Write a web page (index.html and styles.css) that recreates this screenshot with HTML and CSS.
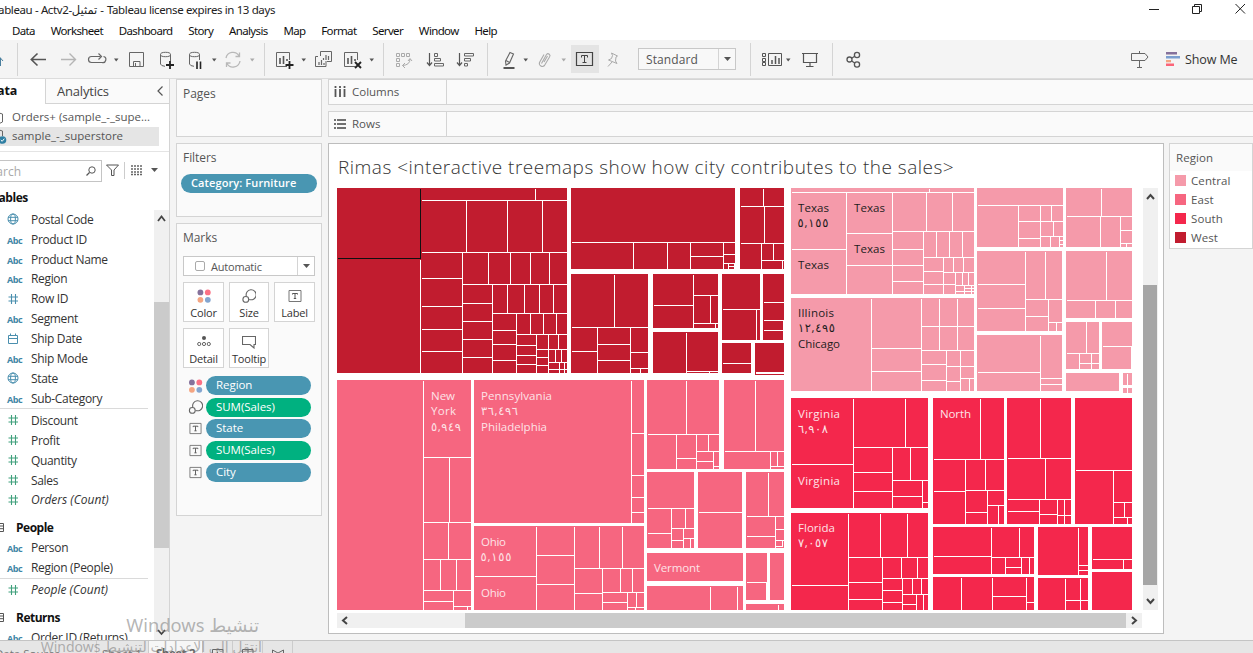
FILE: index.html
```html
<!DOCTYPE html>
<html lang="en">
<head>
<meta charset="utf-8">
<title>Tableau</title>
<link rel="stylesheet" href="styles.css">
</head>
<body>
<svg width="0" height="0" class="defs">
  <defs>
    <symbol id="globe" viewBox="0 0 12 12"><g fill="none" stroke="#4a8fae"><circle cx="6" cy="6" r="5"/><ellipse cx="6" cy="6" rx="2.4" ry="5"/><path d="M1 4.3H11M1 7.7H11"/></g></symbol>
    <symbol id="hash" viewBox="0 0 12 12"><path d="M4.5 1V11M8.5 1V11M1.5 4H11M1.5 8H11" fill="none" stroke="currentColor" stroke-width="1.1"/></symbol>
    <symbol id="cal" viewBox="0 0 12 12"><path d="M1.5 2.5H10.5V10.5H1.5zM1.5 5.5H10.5M3.5 .5V3M8.5 .5V3" fill="none" stroke="#4a8fae"/></symbol>
    <symbol id="dots" viewBox="0 0 14 14"><circle cx="3.4" cy="3.4" r="2.9" fill="#85719b"/><circle cx="10.8" cy="3.4" r="2.9" fill="#fb7185"/><circle cx="3.4" cy="10.8" r="2.9" fill="#f4a582"/><circle cx="10.8" cy="10.8" r="2.9" fill="#84a5cf"/></symbol>
    <symbol id="size" viewBox="0 0 14 14"><g fill="none" stroke="#666" stroke-width="1.1"><path d="M4.4 7.4A5 5 0 1 1 7.2 10.4"/><circle cx="3.8" cy="10.4" r="2.9"/></g></symbol>
    <symbol id="label" viewBox="0 0 14 14"><path d="M1 1.5H13V12.5H1z" fill="none" stroke="#777"/><path d="M4.5 5.5V4.5H9.500V5.500M7 4.500V9.500M5.800 9.500H8.200" fill="none" stroke="#555"/></symbol>
    <symbol id="detail" viewBox="0 0 14 14"><circle cx="7" cy="3" r="2" fill="#555"/><g fill="none" stroke="#666"><circle cx="2.200" cy="9" r="1.600"/><circle cx="7" cy="9" r="1.600"/><circle cx="11.800" cy="9" r="1.600"/></g></symbol>
    <symbol id="tip" viewBox="0 0 14 14"><path d="M.5 1.500H13.500V9.500H12V13L8 9.500H.5z" fill="none" stroke="#666" stroke-width="1.100"/></symbol>
    <symbol id="table" viewBox="0 0 10 10"><path d="M.5 .5H8.500V8.500H.5zM.5 3H8.500M.5 5.700H8.500M4.500 3V8.500" fill="none" stroke="#555"/></symbol>
  </defs>
</svg>

<header class="titlebar">
  <span class="title">Tableau - Actv2-<bdi>تمثيل</bdi> - Tableau license expires in 13 days</span>
  <svg width="113" height="20" viewBox="1140 0 113 20" fill="none" stroke="#222"><path d="M1149 9.500H1159"/><path d="M1192.500 6.500H1199.500V13.500H1192.500zM1194.500 6.500V4.500H1201.500V11.500H1199.500"/><path d="M1235.500 4L1245 13.500M1245 4L1235.500 13.500"/></svg>
</header>
<nav class="menu"><span>Data</span><span>Worksheet</span><span>Dashboard</span><span>Story</span><span>Analysis</span><span>Map</span><span>Format</span><span>Server</span><span>Window</span><span>Help</span></nav>

<div class="toolbar">
  <svg width="17" height="39" viewBox="0 40 17 39"><path d="M-3 61L0 57.500L3 61M.5 58V66" stroke="#4a7f9e" fill="none"/></svg>
  <i class="sep"></i>
  <svg width="36" height="39" viewBox="18 40 36 39"><path d="M31 59.500H46M37.500 53.500L31.300 59.500L37.500 65.500" stroke="#555" stroke-width="1.600" fill="none"/></svg>
  <svg width="30" height="39" viewBox="54 40 30 39"><path d="M61 59.500H75.500M69.500 53.500L75.500 59.500L69.500 65.500" stroke="#b5b5b5" stroke-width="1.400" fill="none"/></svg>
  <svg width="38" height="39" viewBox="84 40 38 39"><path d="M96 62.500H91.500A3 3 0 0 1 91.500 56.500H100.500M103.500 56.500A3 3 0 0 1 102 62.500H95M98.500 53.500L101.500 56.500L98.500 59.500" stroke="#666" stroke-width="1.200" fill="none"/><path d="M114 58.500H118.500L116.200 61.500z" fill="#555"/></svg>
  <svg width="30" height="39" viewBox="122 40 30 39"><path d="M129.500 52.500H143.500V66.500H129.500zM133.500 66V61.500H140V66M135.500 63V66" stroke="#666" fill="none"/></svg>
  <svg width="30" height="39" viewBox="152 40 30 39"><g fill="none" stroke="#666"><ellipse cx="165.500" cy="54.500" rx="5" ry="2.200"/><path d="M160.500 54.500V64Q161 66 165 66.300M170.500 54.500V61"/></g><path d="M170 61V69M166 65H174" stroke="#222" stroke-width="1.800"/></svg>
  <svg width="38" height="39" viewBox="182 40 38 39"><g fill="none" stroke="#666"><ellipse cx="194.500" cy="54.500" rx="5" ry="2.200"/><path d="M189.500 54.500V64Q190 66 194 66.300M199.500 54.500V60"/></g><path d="M197 61.500V69M200.500 61.500V69" stroke="#222" stroke-width="1.600"/><path d="M212 58.500H216.500L214.200 61.500z" fill="#555"/></svg>
  <svg width="44" height="39" viewBox="220 40 44 39"><path d="M226 58A7 7 0 0 1 239 56M240 61A7 7 0 0 1 227 63.500M239.500 52.500V56.500H235.500M226.500 67V63H230.500" fill="none" stroke="#b8b8b8" stroke-width="1.300"/><path d="M250 58.500H254.500L252.200 61.500z" fill="#aaa"/></svg>
  <i class="sep"></i>
  <svg width="45" height="39" viewBox="265 40 45 39"><path d="M287 66.500H276.500V52.500H289.500V60" fill="none" stroke="#666"/><path d="M280 64V58M283.500 64V56M287 61V59" stroke="#555" stroke-width="1.600"/><path d="M289.500 61V69M285.500 65H293.500" stroke="#222" stroke-width="1.800"/><path d="M301.500 58.500H306L303.700 61.500z" fill="#555"/></svg>
  <svg width="27" height="39" viewBox="310 40 27 39"><path d="M320.500 56V51.500H331.500V61.500H327M318 56.500H315.500V66.500H326V61" fill="none" stroke="#666"/><path d="M323.500 60V58M326 60V55M328.500 60V56M319 65V62M321.500 65V60M324 65V63" stroke="#666" stroke-width="1.200"/></svg>
  <svg width="46" height="39" viewBox="337 40 46 39"><path d="M355 66.500H344.500V52.500H357.500V60" fill="none" stroke="#666"/><path d="M348 64V58M351.500 64V56M355 61V59" stroke="#555" stroke-width="1.600"/><path d="M355 62L361 68M361 62L355 68" stroke="#222" stroke-width="1.900"/><path d="M369.500 58.500H374L371.700 61.500z" fill="#555"/></svg>
  <i class="sep"></i>
  <svg width="36" height="39" viewBox="384 40 36 39"><g fill="none" stroke="#aaa"><path d="M396.500 53.500H399.500V56.500H396.500zM401.500 53.500H404.500V56.500H401.500zM406.500 53.500H409.500V56.500H406.500zM396.500 58.500H399.500V61.500H396.500zM396.500 63.500H399.500V66.500H396.500z"/><path d="M410 59Q410 65 402.500 65.500M408 61L410 58.500L412 61M405 63L402.500 65.500L405 68"/></g></svg>
  <svg width="31" height="39" viewBox="420 40 31 39"><path d="M429.500 53V65M427 62.500L429.500 65.500L432 62.500" fill="none" stroke="#555" stroke-width="1.200"/><path d="M434.500 53.500H437.500V56.500H434.500zM434.500 58.500H440.500V61H434.500zM434.500 63.500H443.500V66H434.500z" fill="none" stroke="#666"/></svg>
  <svg width="36" height="39" viewBox="451 40 36 39"><path d="M459.500 53V65M457 62.500L459.500 65.500L462 62.500" fill="none" stroke="#555" stroke-width="1.200"/><path d="M464.500 53.500H473.500V56H464.500zM464.500 58.500H470.500V61H464.500zM464.500 63.500H467.500V66H464.500z" fill="none" stroke="#666"/></svg>
  <i class="sep"></i>
  <svg width="43" height="39" viewBox="488 40 43 39"><path d="M510 52.500L513.500 54L509.500 63L506 65L505.500 61z M506 60.500L509.500 62.500" fill="none" stroke="#666" stroke-width="1.100"/><path d="M503.500 68H514.500" stroke="#555" stroke-width="2"/><path d="M523.500 58.500H528L525.700 61.500z" fill="#555"/></svg>
  <svg width="40" height="39" viewBox="531 40 40 39"><path d="M541.500 63.500L546.500 54.500A1.900 1.900 0 0 1 549.500 57L544.500 65.500A3 3 0 0 1 539.500 62.500L544 54.500M544 62L547.500 56" fill="none" stroke="#aaa" stroke-width="1.100"/><path d="M561.500 58.500H566L563.700 61.500z" fill="#aaa"/></svg>
  <span class="pressed"><svg width="28" height="28" viewBox="571 45 28 28"><path d="M576.500 52.500H592.500V65.500H576.500z" fill="none" stroke="#444" stroke-width="1.200"/><path d="M581.500 57.500V55.500H587.500V57.500M584.500 55.500V62.500M582.500 62.500H586.500" fill="none" stroke="#444"/></svg></span>
  <svg width="39" height="39" viewBox="599 40 39 39"><path d="M611.500 53L617.500 56L616 57L615.500 61L617 63.500L608.500 60L611.500 58.500L612.500 55.500zM612 62L608 66.500" fill="none" stroke="#aaa"/></svg>
  <div class="combo"><span>Standard</span><b><svg width="7" height="4"><path d="M0 0H7L3.500 4z" fill="#555"/></svg></b></div>
  <i class="sep sep-fit"></i>
  <svg width="43" height="39" viewBox="751 40 43 39"><path d="M762.500 53.500H765.500V56.500H762.500zM762.500 58.500H765.500V61.500H762.500zM762.500 62.500H765.500V65.500H762.500zM768.500 53.500H781.500V65.500H768.500z" fill="none" stroke="#555"/><path d="M772 64V60M775.500 64V56M779 64V58" stroke="#555" stroke-width="1.500"/><path d="M786 58.500H790.500L788.200 61.500z" fill="#555"/></svg>
  <svg width="38" height="39" viewBox="794 40 38 39"><path d="M802 53.500H818M803.500 53.500V62.500H816.500V53.500M810 62.500V66.500M806 66.500H813.500" fill="none" stroke="#555" stroke-width="1.200"/></svg>
  <i class="sep"></i>
  <svg width="40" height="39" viewBox="833 40 40 39"><g fill="none" stroke="#555" stroke-width="1.300"><circle cx="849.500" cy="59.500" r="2.500"/><circle cx="857" cy="55" r="2.600"/><circle cx="857" cy="64.500" r="2.600"/><path d="M851.700 58.200L854.700 56.300M851.700 61L854.700 63"/></g></svg>
  <span class="grow"></span>
  <svg width="26" height="39" viewBox="1126 40 26 39"><path d="M1131.500 53.500H1145L1148 57L1145 60.500H1131.500zM1139.500 51V53.500M1139.500 60.500V67.500M1137 67.500H1142" fill="none" stroke="#666"/></svg>
  <svg class="showicon" width="14" height="14"><path d="M0 0H11V2.500H0z" fill="#85719b"/><path d="M0 4H14V6.500H0z" fill="#7b9fd0"/><path d="M0 8H5V10.300H0z" fill="#f4a582"/><path d="M0 11.500H8V14H0z" fill="#fb6478"/></svg>
  <span class="showme">Show Me</span>
</div>

<main class="main">
  <aside class="data">
    <div class="tabs"><b class="on">Data</b><span class="off">Analytics<svg width="7" height="10"><path d="M5.500 .5L1 5L5.500 9.500" fill="none" stroke="#555" stroke-width="1.200"/></svg></span></div>
    <div class="srcs">
      <div class="src"><svg width="10" height="14"><path d="M-4 3Q-1 1 2.500 3V11Q0 13 -3 12" fill="none" stroke="#666"/></svg><span>Orders+ (sample_-_supe...</span></div>
      <div class="src sel"><svg width="10" height="18"><path d="M-4 3Q-1 1 2.500 3V8" fill="none" stroke="#666"/><circle cx="2.500" cy="12" r="3.800" fill="#2f7fa3"/><path d="M.8 12L2.200 13.300L4.300 10.700" fill="none" stroke="#fff"/></svg><span>sample_-_superstore</span></div>
    </div>
    <div class="find">
      <div class="search"><span>Search</span><svg width="10" height="10"><circle cx="6" cy="4" r="3.200" fill="none" stroke="#555"/><path d="M3.500 6.500L.5 9.500" stroke="#555" stroke-width="1.200"/></svg></div>
      <svg width="62" height="22" viewBox="102 160 62 22"><path d="M106.500 165H118.500L114 170V175.500H111.500V170z" fill="none" stroke="#555"/><path d="M124.500 162V179" stroke="#ccc"/><path d="M131 166H142M131 169H142M131 172H142M131 174.500H142" stroke="#666" stroke-width="1.500" stroke-dasharray="2 1"/><path d="M151 168H158L154.500 172z" fill="#555"/></svg>
    </div>
    <div class="thead">Tables</div>
    <div class="fields">
      <div class="list">
        <div class="f"><svg width="12" height="12"><use href="#globe"/></svg>Postal Code</div>
        <div class="f"><em>Abc</em>Product ID</div>
        <div class="f"><em>Abc</em>Product Name</div>
        <div class="f"><em>Abc</em>Region</div>
        <div class="f dim"><svg width="12" height="12"><use href="#hash"/></svg>Row ID</div>
        <div class="f"><em>Abc</em>Segment</div>
        <div class="f"><svg width="12" height="12"><use href="#cal"/></svg>Ship Date</div>
        <div class="f"><em>Abc</em>Ship Mode</div>
        <div class="f"><svg width="12" height="12"><use href="#globe"/></svg>State</div>
        <div class="f"><em>Abc</em>Sub-Category</div>
        <hr>
        <div class="f mea"><svg width="12" height="12"><use href="#hash"/></svg>Discount</div>
        <div class="f mea"><svg width="12" height="12"><use href="#hash"/></svg>Profit</div>
        <div class="f mea"><svg width="12" height="12"><use href="#hash"/></svg>Quantity</div>
        <div class="f mea"><svg width="12" height="12"><use href="#hash"/></svg>Sales</div>
        <div class="f mea it"><svg width="12" height="12"><use href="#hash"/></svg>Orders (Count)</div>
        <div class="tbl"><svg width="10" height="10"><use href="#table"/></svg>People</div>
        <div class="f"><em>Abc</em>Person</div>
        <div class="f"><em>Abc</em>Region (People)</div>
        <hr>
        <div class="f mea it"><svg width="12" height="12"><use href="#hash"/></svg>People (Count)</div>
        <div class="tbl"><svg width="10" height="10"><use href="#table"/></svg>Returns</div>
        <div class="f"><em>Abc</em>Order ID (Returns)</div>
      </div>
      <div class="vs"><svg width="15" height="92"><path d="M4 11L7.500 6.500L11 11" fill="none" stroke="#444" stroke-width="1.800"/></svg><i></i><svg class="end" width="15" height="20"><path d="M4 10L7.500 14L11 10" fill="none" stroke="#444" stroke-width="1.800"/></svg></div>
    </div>
  </aside>

  <section class="cards">
    <div class="card pages">Pages</div>
    <div class="card filters">Filters<span class="pill">Category: Furniture</span></div>
    <div class="card marks">Marks
      <div class="mtype"><i></i><span>Automatic</span><b><svg width="7" height="4"><path d="M0 0H7L3.500 4z" fill="#555"/></svg></b></div>
      <div class="btns">
        <div><svg width="14" height="14"><use href="#dots"/></svg>Color</div>
        <div><svg width="14" height="14"><use href="#size"/></svg>Size</div>
        <div><svg width="14" height="14"><use href="#label"/></svg>Label</div>
        <div><svg width="14" height="14"><use href="#detail"/></svg>Detail</div>
        <div><svg width="14" height="14"><use href="#tip"/></svg>Tooltip</div>
      </div>
      <div class="enc"><svg width="14" height="14"><use href="#dots"/></svg><span class="pill">Region</span></div>
      <div class="enc"><svg width="14" height="14"><use href="#size"/></svg><span class="pill green">SUM(Sales)</span></div>
      <div class="enc"><svg width="13" height="13"><use href="#label"/></svg><span class="pill">State</span></div>
      <div class="enc"><svg width="13" height="13"><use href="#label"/></svg><span class="pill green">SUM(Sales)</span></div>
      <div class="enc"><svg width="13" height="13"><use href="#label"/></svg><span class="pill">City</span></div>
    </div>
  </section>

  <section class="work">
    <div class="shelf"><div><svg width="12" height="12"><path d="M1.500 0V2M1.500 3V11M6 0V2M6 3V11M10.500 0V2M10.500 3V11" stroke="#555" stroke-width="1.800"/></svg>Columns</div></div>
    <div class="shelf"><div><svg width="12" height="12"><path d="M0 2H2M3 2H12M0 6H2M3 6H12M0 10H2M3 10H12" stroke="#444" stroke-width="1.700"/></svg>Rows</div></div>
    <div class="row">
      <div class="viz">
        <h1>Rimas &lt;interactive treemaps show how city contributes to the sales&gt;</h1>
        <div class="plot">
          <svg class="map" width="796" height="422" viewBox="337 188 796 422">
            <path fill="#c11c2f" d="M337 188H567V373H337zM571 188H735V269H571zM740 188H784V269H740zM571 274H648V373H571zM653 274H718V328H653zM653 332H718V373H653zM722 274H760V340H722zM763 274H784V340H763zM722 343H751V373H722zM755 343H784V375H755z"/>
            <path fill="#f66680" d="M337 380H471V610H337zM474 380H644V523H474zM474 526H644V610H474zM647 380H719V469H647zM724 380H784V469H724zM647 472H694V548H647zM698 472H742V548H698zM746 472H784V548H746zM647 553H743V581H647zM647 586H743V610H647zM746 553H767V600H746zM770 553H784V600H770zM746 604H784V610H746z"/>
            <path fill="#f59aaa" d="M791 188H974V294H791zM791 298H974V391H791zM977 188H1063V247H977zM1066 188H1132V247H1066zM977 251H1062V331H977zM1066 251H1132V318H1066zM977 335H1062V391H977zM1066 322H1099V369H1066zM1102 322H1132V369H1102zM1066 373H1119V391H1066zM1123 373H1132V385H1123zM1123 388H1132V393H1123z"/>
            <path fill="#f4274c" d="M791 398H928V508H791zM791 513H928V610H791zM933 398H1004V524H933zM1007 398H1071V524H1007zM1075 398H1132V524H1075zM933 527H1034V574H933zM1038 527H1088V575H1038zM1092 527H1132V569H1092zM933 577H1034V610H933zM1038 578H1088V610H1038zM1092 572H1132V610H1092z"/>
            <g class="cuts" transform="translate(.5 .5)">
              <path d="M420 259V373M421 200H567M535 188V200M421 252H567M466 200V252M507 200V252M542 200V252M462 252V373M421 278H462M421 306H462M421 329H462M421 351H462M462 284H567M488 252V284M510 252V284M530 252V284M549 252V284M492 284V373M462 303H492M462 321H492M462 339H492M462 357H492M492 313H567M507 284V313M524 284V313M539 284V313M553 284V313M516 313V373M492 330H516M492 344H516M492 360H516M516 334H567M530 313V334M543 313V334M556 313V334M536 334V373M516 345H536M516 355H536M516 364H536M536 349H567M548 334V373M558 334V349M536 357H548M536 365H548M548 362H567M548 369H567M555 349V362M561 349V362M559 362V373M564 362V373"/>
              <path d="M571 242H735M633 242V269M667 242V269M690 242V269M723 242V269M690 256H723M723 254H735M723 263H735M728 263V269M728 266H734M734 263V269M740 206H784M763 188V206M764 206V243M740 243H784M761 243V269M773 243V260M761 260H784M782 260V269M614 274V327M571 327H648M597 327V373M630 327V373M571 351H597M597 344H630M597 360H630M630 352H648M630 368H648M640 368V373M693 274V329M653 305H693M693 295H718M710 295V323M693 323H718M715 323V329M686 332V373M686 371H718M709 371V373M722 309H760M756 309V340M763 302H784M763 320H784M763 330H784M783 320V340M722 363H751M755 372H784M755 373H784"/>
              <path d="M423 380V610M423 457H471M449 457V522M423 522H471M448 522V559M423 559H471M440 559V590M456 559V590M423 590H471M453 590V610M423 601H453M453 606H471M467 606V610M631 380V523M631 433H644M631 475H644M631 497H644M631 512H644M536 526V610M474 576H536M574 526V610M536 555H574M536 584H574M574 568H644M599 526V568M622 526V568M602 568V610M620 568V592M632 568V592M602 592H644M574 593H602M602 602H627M627 592V610M636 592V607M627 607H644M635 607V610"/>
              <path d="M647 434H719M686 380V434M676 434V469M696 434V469M676 458H696M696 451H719M708 434V451M713 451V469M696 461H713M713 466H719M755 380V451M724 451H784M770 451V469M777 451V466M770 466H784M647 508H694M671 508V548M685 508V528M671 528H694M647 533H671M683 528V548M671 540H683M683 538H694M690 538V548M698 512H742M768 472V516M746 516H784M775 516V548M746 536H775M775 529H784M775 540H784M775 546H782M782 540V546M710 586V610M737 586V610M746 582H767M766 582V600M778 604V610"/>
              <path d="M791 192H974M929 188V192M846 192V294M791 249H846M892 192V294M846 233H892M846 265H923M892 231H974M926 192V231M952 192V231M923 231V294M892 249H923M892 281H923M936 231V257M949 231V257M962 231V257M923 257H974M943 257V294M923 271H943M923 284H955M953 257V272M963 257V272M943 272H974M955 272V294M962 272V285M968 272V285M955 285H974M955 291H964M964 285V294M964 288H974M964 291H974M971 285V294M871 298V391M921 298V391M871 348H921M871 371H921M921 326H974M939 298V350M957 298V350M921 350H974M946 350V391M960 350V391M921 364H946M921 380H946M946 366H974M946 381H960M960 378H974M969 378V391"/>
              <path d="M977 205H1063M1018 205V247M1040 205V247M1051 205V221M1018 221H1063M1053 221V236M1018 238H1040M1040 236H1063M1050 236V247M1059 236V247M1059 240H1063M1059 244H1063M1066 216H1132M1101 188V216M1100 216V247M1120 216V247M1120 230H1132M1120 243H1132M1126 243V247M1025 251V332M977 284H1025M977 308H1025M1045 251V299M1025 299H1062M1048 299V332M1025 316H1048M1048 322H1062M1056 322V332M1066 300H1132M1106 251V300M1095 300V318M1115 300V318M1040 335V391M977 372H1040M1040 378H1062M1040 384H1062M1066 353H1099M1086 321V353M1079 353V369M1091 353V369M1079 363H1099M1102 346H1132M1131 346V369M1127 373V393"/>
              <path d="M853 398V509M791 464H853M905 398V447M853 447H928M892 447V509M853 472H892M853 491H892M910 447V480M892 480H928M922 480V509M892 496H922M922 502H928M848 513V610M791 585H848M848 557H928M880 513V557M907 513V557M882 557V610M848 582H882M848 599H882M901 557V578M917 557V578M882 578H928M902 578V610M882 590H902M882 602H902M912 578V594M921 578V594M902 594H928M916 594V610M902 604H916M923 594V610M980 398V459M933 459H1004M965 459V524M933 491H965M985 459V490M965 490H1004M987 490V524M965 512H987M987 505H1004M998 505V524M1007 458H1071M1040 398V458M1045 458V499M1007 499H1071M1039 499V524M1007 511H1039M1057 499V524M1039 514H1057M1057 515H1071M1064 499V524M1075 470H1132M1113 470V524M1113 502H1132M1124 502V517M1113 517H1132M1127 517V524"/>
              <path d="M991 527V574M933 556H991M1019 527V557M991 557H1034M1005 557V574M1021 557V574M1029 557V574M1005 567H1021M1078 527V575M1078 565H1088M1078 570H1088M1092 559H1132M1123 559V570M961 577V610M992 577V610M1026 577V610M992 596H1026M1026 602H1034M1065 578V610M1080 578V610M1065 600H1088"/>
              <path class="picked" d="M337 258H420V188"/>
            </g>
            <g class="lab dark" transform="translate(0 -.8)">
              <text x="798" y="213" textLength="31">Texas</text><text x="797.500" y="228" textLength="31">٥,١٥٥</text><text x="854" y="213" textLength="31">Texas</text><text x="854" y="253.500" textLength="31">Texas</text><text x="798" y="270" textLength="31">Texas</text>
              <text x="798" y="318" textLength="36">Illinois</text><text x="798" y="333" textLength="37">١٢,٤٩٥</text><text x="798" y="349" textLength="42">Chicago</text>
            </g>
            <g class="lab" transform="translate(0 -.3)">
              <text x="431" y="400" textLength="24">New</text><text x="431" y="415" textLength="25">York</text><text x="431" y="431" textLength="30">٥,٩٤٩</text>
              <text x="481" y="400" textLength="71">Pennsylvania</text><text x="481" y="415" textLength="37">٣٦,٤٩٦</text><text x="481" y="431" textLength="66">Philadelphia</text>
              <text x="481" y="546" textLength="25">Ohio</text><text x="480.500" y="561" textLength="31">٥,١٥٥</text><text x="481" y="597" textLength="25">Ohio</text>
              <text x="654" y="572" textLength="46">Vermont</text>
              <text x="798" y="418" textLength="42">Virginia</text><text x="798" y="433" textLength="30">٦,٩٠٨</text><text x="798" y="485" textLength="42">Virginia</text>
              <text x="798" y="532" textLength="37">Florida</text><text x="798" y="547.500" textLength="30">٧,٠٥٧</text>
              <text x="940" y="418" textLength="31">North</text>
            </g>
          </svg>
          <div class="vscroll"><svg width="15" height="97"><path d="M4 11L7.500 7L11 11" fill="none" stroke="#444" stroke-width="2"/></svg><i></i><svg width="15" height="24"><path d="M4 14L7.500 18L11 14" fill="none" stroke="#444" stroke-width="2"/></svg></div>
        </div>
        <div class="hscroll"><svg width="128" height="15"><path d="M10 4L6 7.500L10 11" fill="none" stroke="#444" stroke-width="2"/></svg><i></i><svg width="16" height="15"><path d="M6 4L10 7.500L6 11" fill="none" stroke="#444" stroke-width="2"/></svg></div>
      </div>
      <div class="legend"><h2>Region</h2>
        <div><i class="c"></i>Central</div><div><i class="e"></i>East</div><div><i class="s"></i>South</div><div><i class="w"></i>West</div>
      </div>
    </div>
  </section>
</main>

<footer class="sheets">
  <span class="ds">Data Source</span><span class="s1">Sheet 1</span><b class="s2">Sheet 2</b>
  <span class="ic"><svg width="12" height="10"><path d="M.5 9V.5H11V9M3 9V5M5.500 9V3M8 6H11" fill="none" stroke="#666"/></svg></span>
  <span class="ic"><svg width="12" height="10"><path d="M.5 9V.5H11V9M.5 5H11M6 0V9" fill="none" stroke="#666"/></svg></span>
  <span class="ic"><svg width="12" height="10"><path d="M.5 9V1L6 4L11.500 1V9" fill="none" stroke="#666"/></svg></span>
</footer>
<div class="wm wm1" dir="rtl">تنشيط Windows</div>
<div class="wm wm2" dir="rtl">انتقل إلى الإعدادات لتنشيط Windows</div>
</body>
</html>
```
FILE: styles.css
```css
*{box-sizing:border-box}
body{margin:0;width:1253px;height:653px;overflow:hidden;background:#fff;display:flex;flex-direction:column;font:12px "Open Sans","DejaVu Sans",sans-serif;color:#444;position:relative}
svg{display:block;flex:none}
.defs{position:absolute}
.titlebar{height:20px;flex:none;display:flex;justify-content:space-between;font:11.500px/20px "Noto Sans","DejaVu Sans",sans-serif;color:#222;white-space:nowrap}
.title{margin-left:-7px;letter-spacing:-.38px}
.menu{height:20px;flex:none;display:flex;gap:15.800px;padding-left:12px;font:11.500px/22px "Noto Sans",sans-serif;letter-spacing:-.64px;color:#111}
.toolbar{height:39px;flex:none;background:#f4f4f4;display:flex;align-items:center;border-bottom:1px solid #dcdcdc}
.sep{width:1px;height:33px;background:#d4d4d4;flex:none}
.pressed{width:28px;height:28px;background:#e4e4e4}
.combo{width:98px;height:22px;border:1px solid #c8c8c8;background:#f8f8f8;display:flex;align-items:center;color:#555;letter-spacing:.1px}
.combo span{flex:1;padding-left:7px}
.combo b,.mtype b{width:17px;height:100%;border-left:1px solid #d4d4d4;display:flex;align-items:center;justify-content:center}
.sep-fit{margin-left:14px}
.grow{flex:1}
.showicon{margin:0 5px 0 14px}
.showme{width:68px;color:#333;font-size:12.500px;letter-spacing:-.1px;white-space:nowrap}
.main{flex:1;min-height:0;background:#f4f4f4;display:flex}
.data{width:170px;background:#fff;border-right:1px solid #d4d4d4;display:flex;flex-direction:column;flex:none}
.tabs{height:25px;display:flex;line-height:24px;font-size:13px;letter-spacing:-.2px;flex:none}
.tabs .on{width:45px;text-indent:-12px;overflow:hidden;color:#111;font-size:12.500px}
.tabs .off{flex:1;background:#fafafa;border-left:1px solid #d4d4d4;border-bottom:1px solid #d4d4d4;padding:0 5px 0 11px;display:flex;justify-content:space-between;align-items:center}
.srcs{height:48px;padding-top:4px;border-bottom:1px solid #e4e4e4;flex:none}
.src{height:19px;width:159px;display:flex;align-items:center;gap:2px;font-size:11.500px;color:#555;white-space:nowrap}
.src span{padding-bottom:2px}
.sel{background:#e5e5e5}
.find{display:flex;margin-top:8px;height:22px;flex:none}
.search{width:102px;height:22px;border:1px solid #c4c4c4;border-left:0;display:flex;align-items:center;justify-content:space-between;padding-right:5px;color:#aaa}
.search span{margin-left:-17px}
.thead{font-weight:700;color:#111;line-height:32px;letter-spacing:-.45px;margin-left:-8px;height:27px;flex:none}
.fields{flex:1;min-height:0;display:flex}
.list{width:154px;overflow:hidden;padding-top:.3px;letter-spacing:-.33px}
.f{height:19.900px;display:flex;align-items:center;padding-left:7px;color:#333;white-space:nowrap;font-size:12px}
.f em{font:700 9px "Open Sans",sans-serif;color:#3f86a5;width:24px;letter-spacing:-.4px;padding-top:2px}
.f svg{width:12px;margin-right:12px;color:#4a8fae}
.mea svg{color:#3fa07c}
.it{font-style:italic;letter-spacing:0}
.list hr{border:0;border-top:1px solid #dadada;margin:0 6px 1.200px 0;height:0}
.tbl{height:20px;margin-top:8px;display:flex;align-items:center;font-weight:700;color:#111;gap:11px;margin-left:-5px;letter-spacing:-.5px}
.vs{width:15px;background:#f0f0f0;display:flex;flex-direction:column;margin-top:1px}
.vs i{height:246px;background:#cbcbcb}
.vs .end{margin-top:auto}
.cards{width:146px;margin-left:6px;display:flex;flex-direction:column;gap:6px;flex:none}
.card{border:1px solid #d4d4d4;background:#fafafa;padding:5px 6px 0;letter-spacing:-.05px;line-height:17px;color:#555}
.pages{height:58px}
.filters{height:74px}
.marks{height:293px}
.pill{background:#4996b2;color:#fff;border-radius:10px;height:19px;line-height:18px;padding-left:10px;display:block;font-size:11.500px}
.filters .pill{margin:8px -2px 0 -2px;font-weight:600;font-size:11px;letter-spacing:.1px}
.green{background:#00b180}
.mtype{height:20px;border:1px solid #c8c8c8;background:#fff;display:flex;align-items:center;margin-top:10px;font-size:11px;letter-spacing:-.2px}
.mtype i{width:10px;height:10px;border:1px solid #aaa;border-radius:2px;margin:0 6px 0 11px}
.mtype span{flex:1}
.btns{display:grid;grid-template-columns:41px 40px 41px;gap:6px 5px;margin-top:6px}
.btns div{height:40px;border:1px solid #d4d4d4;background:#fff;display:flex;flex-direction:column;align-items:center;font-size:11px;color:#333;padding-top:6px;gap:1px;letter-spacing:-.2px}
.enc{display:flex;align-items:center;gap:3px;height:19px;margin-bottom:2.700px;padding-left:5px}
.enc svg{width:15px}
.btns + .enc{margin-top:8px}
.enc .pill{width:105px}
.work{flex:1;min-width:0;margin-left:6px;display:flex;flex-direction:column}
.shelf{height:26px;border:1px solid #d4d4d4;border-right:0;background:#fafafa;margin-bottom:6px;flex:none}
.shelf div{width:118px;height:100%;border-right:1px solid #d4d4d4;display:flex;align-items:center;padding:0 0 1px 5px;gap:6px;font-size:11.500px;color:#555}
.row{display:flex;flex:1;min-height:0;align-items:flex-start}
.viz{width:836px;height:491px;background:#fff;border:1px solid #bdbdbd;padding-left:8px;flex:none}
.viz h1{margin:0;height:44px;line-height:47px;font-size:19px;font-weight:300;letter-spacing:.5px;white-space:nowrap;padding-left:1px;color:#333}
.plot{display:flex;gap:10px;height:422px}
.cuts{fill:none;stroke:#fff;stroke-width:1;shape-rendering:crispEdges}
.cuts .picked{stroke:#111}
.lab{font-size:11.500px;fill:#fde3e7}
.lab.dark{fill:#1d1d1d}
.vscroll{width:15px;background:#f0f0f0}
.vscroll i{display:block;width:14px;height:300px;background:#a6a6a6}
.hscroll{width:805px;height:15px;margin-top:3px;background:#f0f0f0;display:flex}
.hscroll i{flex:1;background:#cbcbcb}
.legend{width:90px;height:106px;margin-left:5px;border:1px solid #d4d4d4;background:#fff;font-size:11.500px;letter-spacing:.1px;color:#555}
.legend h2{margin:0;background:#fafafa;font-size:11.500px;font-weight:400;height:27px;line-height:28px;padding-left:6px}
.legend div{height:19px;display:flex;align-items:center;gap:5px;padding-left:5px}
.legend i{width:11px;height:11px}
.c{background:#f59aaa}.e{background:#f66680}.s{background:#f4274c}.w{background:#c11c2f}
.sheets{height:13px;flex:none;background:#e6e6e6;border-top:1px solid #c4c4c4;display:flex;overflow:hidden;font-size:11.500px;line-height:26px;color:#777;white-space:nowrap}
.sheets>*{height:13px;border-right:1px solid #ccc}
.ds{width:97px;text-indent:-5px}
.s1{width:52px;padding-left:5px}
.s2{width:54px;background:#f6f6f6;text-align:center;color:#666;letter-spacing:-.4px}
.ic{width:30px;padding:8px 0 0 9px}
.wm{position:absolute;color:rgba(120,120,120,.55);white-space:nowrap;font-family:"Noto Sans","DejaVu Sans",sans-serif}
.wm1{right:994px;top:612px;font-size:18.300px;line-height:26px}
.wm2{right:991px;top:638px;font-size:14px;line-height:18px}
```
